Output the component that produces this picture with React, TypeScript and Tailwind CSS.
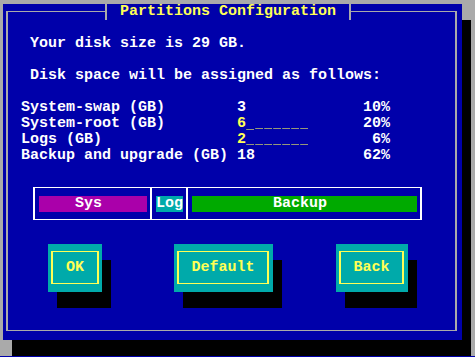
import type { ReactNode } from 'react';

const mono = "font-['Liberation_Mono',monospace] font-bold text-[15px] leading-[16px]";

function Row({ children }: { children?: ReactNode }) {
  return <div className="h-[16px] whitespace-pre">{children}</div>;
}

// VGA-style underscore: 8px stroke with a 1px gap inside each 9px cell
function Blank({ cursor = false }: { cursor?: boolean }) {
  return (
    <span
      className={`inline-block w-[8px] mr-[1px] h-[16px] overflow-hidden align-top ${cursor ? 'translate-y-[1px]' : ''}`}
    >
      _
    </span>
  );
}

function Field({ value, cursor = false }: { value: string; cursor?: boolean }) {
  return (
    <span className="text-[#ffff55]">
      {value}
      <Blank cursor={cursor} />
      <Blank />
      <Blank />
      <Blank />
      <Blank />
      <Blank />
      <Blank />
    </span>
  );
}

function Button({ label, width, pr }: { label: string; width: string; pr: string }) {
  return (
    <div className={`${width} ${pr} h-[48px] bg-[#00aaaa] shadow-[9px_16px_0_#000] pt-[7px] pb-[8px] pl-[3px]`}>
      <div className="h-full border-x-2 border-y border-[#ffff55] flex items-center justify-center text-[#ffff55] whitespace-pre">
        {label}
      </div>
    </div>
  );
}

export default function App() {
  return (
    <div className={`w-[475px] h-[358px] bg-white flex flex-col ${mono}`}>
      <div className="h-[356px] bg-[#aaaaaa] pt-[4px] pl-[3px] overflow-hidden">
        <div className="w-[459px] h-[336px] bg-[#0000aa] shadow-[9px_16px_0_#000] pt-[7px] pl-[3px]">
          <div className="relative w-[451px] h-[320px] border-x-2 border-y border-[#aaaaaa] pl-[13px] pt-[24px] text-white">
            {/* title sits over the top border */}
            <div className="absolute left-[97px] top-[-8px] h-[16px] border-x-2 border-[#aaaaaa] bg-[#0000aa] px-[13px] text-[#ffff55] whitespace-pre">
              Partitions Configuration
            </div>

            <Row> Your disk size is 29 GB.</Row>
            <Row />
            <Row> Disk space will be assigned as follows:</Row>
            <Row />
            <Row>{'System-swap (GB)        3             10%'}</Row>
            <Row>
              {'System-root (GB)        '}
              <Field value="6" cursor />
              {'      20%'}
            </Row>
            <Row>
              {'Logs (GB)               '}
              <Field value="2" />
              {'       6%'}
            </Row>
            <Row>{'Backup and upgrade (GB) 18            62%'}</Row>

            {/* partition bar */}
            <div className="mt-[23px] ml-[12px] w-[389px] h-[33px] border-x-2 border-y border-white flex">
              <div className="pl-[4px] pr-[3px] pt-[8px] border-r-2 border-white">
                <div className="w-[108px] h-[16px] bg-[#aa00aa] pl-[36px] whitespace-pre">Sys</div>
              </div>
              <div className="pl-[4px] pr-[3px] pt-[8px] border-r-2 border-white">
                <div className="w-[27px] h-[16px] bg-[#00aaaa] whitespace-pre">Log</div>
              </div>
              <div className="pl-[4px] pr-[3px] pt-[8px]">
                <div className="w-[225px] h-[16px] bg-[#00aa00] pl-[81px] whitespace-pre">Backup</div>
              </div>
            </div>

            {/* buttons */}
            <div className="mt-[24px] ml-[27px] flex">
              <Button label="OK" width="w-[54px]" pr="pr-[3px]" />
              <div className="ml-[72px]">
                <Button label="Default" width="w-[99px]" pr="pr-[4px]" />
              </div>
              <div className="ml-[63px]">
                <Button label="Back" width="w-[72px]" pr="pr-[4px]" />
              </div>
            </div>
          </div>
        </div>
      </div>
      <div className="h-[1px] bg-[#0000aa]" />
    </div>
  );
}
